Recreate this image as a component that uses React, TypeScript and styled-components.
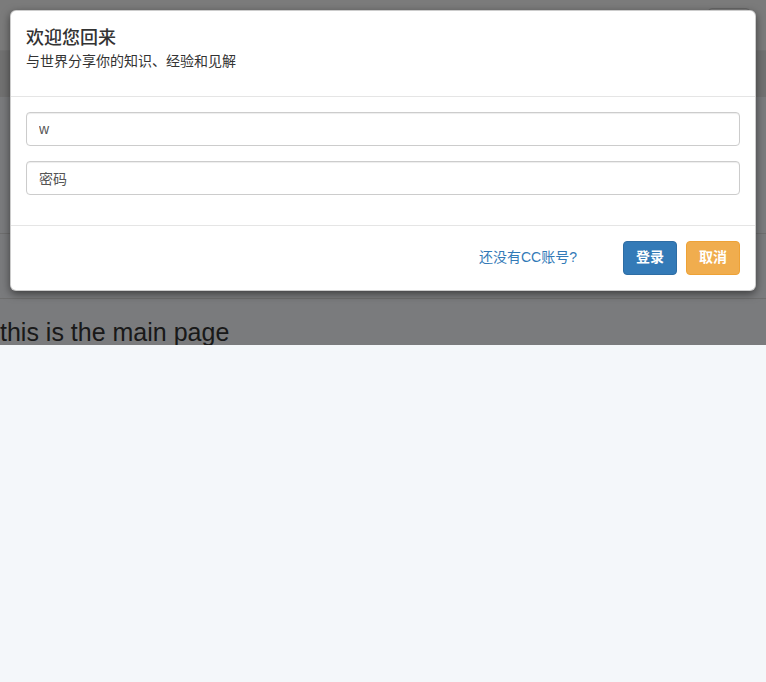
import { FC } from "react";
import styled, { createGlobalStyle } from "styled-components";

const GlobalStyle = createGlobalStyle`
  html, body {
    margin: 0;
    padding: 0;
    background: #f4f7fa;
  }
  body {
    font-family: "Liberation Sans", "Noto Sans CJK SC", Arial, sans-serif;
    font-size: 14px;
    line-height: 1.42857;
    color: #333;
  }
  * {
    box-sizing: border-box;
  }
`;

const Page = styled.div`
  position: relative;
  height: 345px;
  overflow: hidden;
  background: #f4f7fa;
`;

const Navbar = styled.nav`
  display: flex;
  justify-content: flex-end;
  height: 51px;
  padding: 8px 16px 0;
  background: #f6f6f6;
  border-bottom: 1px solid #e9e9e9;
`;

const NavButton = styled.span`
  display: block;
  width: 42px;
  height: 34px;
  background: #fff;
  border: 1px solid #ccc;
  border-radius: 4px;
`;

const SubBar = styled.div`
  height: 46px;
  background: #e3e3e3;
`;

const Section = styled.div<{ $height: number }>`
  height: ${(p) => p.$height}px;
  border-bottom: 1px solid #dcdcdc;
`;

const MainTitle = styled.h3`
  margin: 20px 0 10px;
  font-size: 25px;
  font-weight: 500;
  line-height: 1.1;
  color: #333;
`;

const Backdrop = styled.div`
  position: absolute;
  inset: 0;
  background: rgba(0, 0, 0, 0.5);
`;

const Dialog = styled.div`
  position: absolute;
  top: 10px;
  left: 10px;
  right: 10px;
  background: #fff;
  border: 1px solid rgba(0, 0, 0, 0.2);
  border-radius: 6px;
  box-shadow: 0 3px 9px rgba(0, 0, 0, 0.5);
`;

const Header = styled.div`
  padding: 15px;
  border-bottom: 1px solid #e5e5e5;
`;

const Title = styled.h4`
  margin: 0;
  font-size: 18px;
  font-weight: 500;
  line-height: 1.42857;
  color: #333;
`;

const Subtitle = styled.p`
  margin: 0 0 9px;
  font-size: 14px;
`;

const Body = styled.div`
  display: flex;
  flex-direction: column;
  gap: 15px;
  padding: 15px 15px 30px;
`;

const Field = styled.input`
  display: block;
  width: 100%;
  height: 34px;
  padding: 6px 12px;
  font-family: inherit;
  font-size: 14px;
  line-height: 1.42857;
  color: #555;
  background: #fff;
  border: 1px solid #ccc;
  border-radius: 4px;
  box-shadow: inset 0 1px 1px rgba(0, 0, 0, 0.075);
  outline: none;
`;

const Footer = styled.div`
  display: flex;
  justify-content: flex-end;
  align-items: center;
  gap: 9px;
  padding: 15px;
  border-top: 1px solid #e5e5e5;
`;

const SignupLink = styled.a`
  margin-right: 37px;
  font-size: 14px;
  color: #337ab7;
  text-decoration: none;
  cursor: pointer;
`;

const tones = {
  primary: { bg: "#337ab7", border: "#2e6da4" },
  warning: { bg: "#f0ad4e", border: "#eea236" },
};

const Button = styled.button<{ $tone: keyof typeof tones }>`
  height: 34px;
  padding: 6px 12px;
  font-family: inherit;
  font-size: 14px;
  font-weight: bold;
  line-height: 1.42857;
  color: #fff;
  background: ${(p) => tones[p.$tone].bg};
  border: 1px solid ${(p) => tones[p.$tone].border};
  border-radius: 4px;
  cursor: pointer;
`;

const LoginModal: FC = () => (
  <Dialog>
    <Header>
      <Title>欢迎您回来</Title>
      <Subtitle>与世界分享你的知识、经验和见解</Subtitle>
    </Header>
    <Body>
      <Field type="text" value="w" readOnly />
      <Field type="text" value="密码" readOnly />
    </Body>
    <Footer>
      <SignupLink>还没有CC账号?</SignupLink>
      <Button $tone="primary">登录</Button>
      <Button $tone="warning">取消</Button>
    </Footer>
  </Dialog>
);

export default function App() {
  return (
    <>
      <GlobalStyle />
      <Page>
        <Navbar>
          <NavButton />
        </Navbar>
        <SubBar />
        <Section $height={137} />
        <Section $height={65} />
        <MainTitle>this is the main page</MainTitle>
        <Backdrop />
        <LoginModal />
      </Page>
    </>
  );
}
